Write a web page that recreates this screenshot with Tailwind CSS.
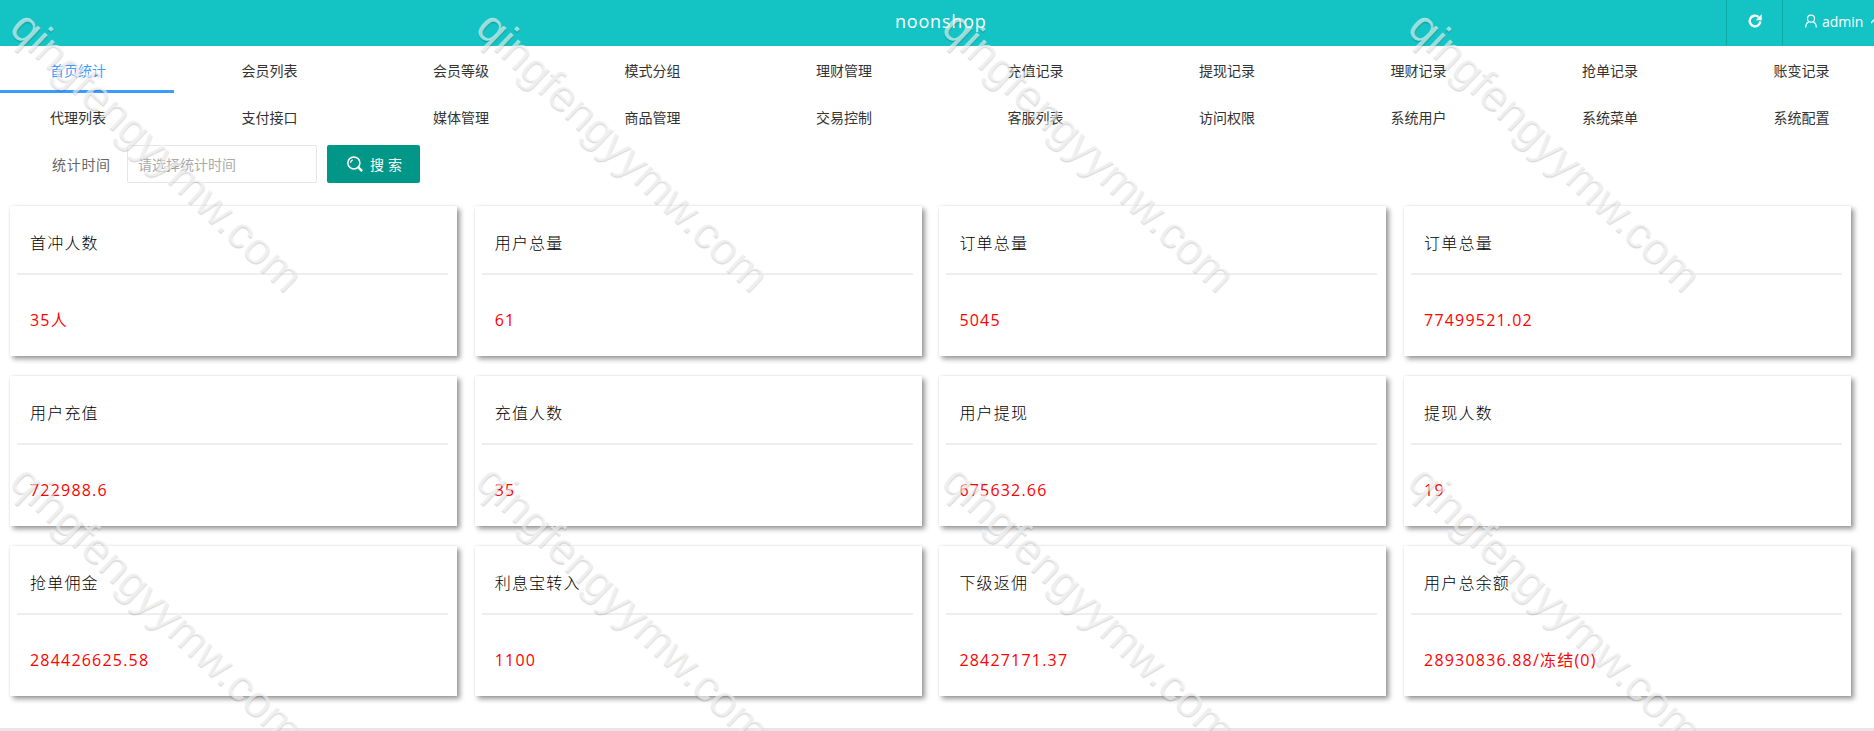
<!DOCTYPE html>
<html lang="zh">
<head>
<meta charset="utf-8">
<script src="https://cdn.jsdelivr.net/npm/@tailwindcss/browser@4"></script>
<title>noonshop</title>
</head>
<body class="relative h-[731px] w-[1874px] overflow-hidden bg-white font-['Open_Sans','Noto_Sans_CJK_SC',sans-serif]">
<header class="flex h-[46px] items-center bg-[#14c4c5] text-white">
  <div class="flex-1 pb-[3px] pl-[895px] text-[18px] font-medium tracking-[0.8px]">noonshop</div>
  <div class="flex h-full w-[56px] items-center justify-center border-l border-[#0fa9aa] pb-[4px]">
    <svg class="h-[16px] w-[16px]" viewBox="0 0 24 24" fill="none" stroke="white" stroke-width="3.500"><path d="M20 12.500a8 8 0 1 1-2.800-6.600"/><path d="M22 2v9h-9z" fill="white" stroke="none"/></svg>
  </div>
  <div class="flex h-full w-[92px] items-center overflow-hidden border-l border-[#0fa9aa] pb-[4px] pl-[21px] text-[14px]">
    <svg class="mr-[4px] h-[14px] w-[14px] shrink-0" viewBox="0 0 24 24" fill="none" stroke="white" stroke-width="2"><circle cx="12" cy="8" r="6"/><path d="M3 23c0-6 3-9 6-10M21 23c0-6-3-9-6-10"/></svg>
    <span>admin</span>
    <svg class="ml-[8px] h-[6px] w-[8px] shrink-0" viewBox="0 0 8 6" fill="none" stroke="white" stroke-width="1.300"><path d="M0 5l4-4 4 4"/></svg>
  </div>
</header>
<nav class="grid grid-cols-[repeat(10,174px)] gap-x-[17.5px] text-[14px] text-[#333]">
  <a class="h-[47px] border-b-[3px] border-[#3b9cff] pl-[50px] pt-[14px] leading-[22px] text-[#409eff]">首页统计</a>
  <a class="h-[47px] pl-[50px] pt-[14px] leading-[22px]">会员列表</a>
  <a class="h-[47px] pl-[50px] pt-[14px] leading-[22px]">会员等级</a>
  <a class="h-[47px] pl-[50px] pt-[14px] leading-[22px]">模式分组</a>
  <a class="h-[47px] pl-[50px] pt-[14px] leading-[22px]">理财管理</a>
  <a class="h-[47px] pl-[50px] pt-[14px] leading-[22px]">充值记录</a>
  <a class="h-[47px] pl-[50px] pt-[14px] leading-[22px]">提现记录</a>
  <a class="h-[47px] pl-[50px] pt-[14px] leading-[22px]">理财记录</a>
  <a class="h-[47px] pl-[50px] pt-[14px] leading-[22px]">抢单记录</a>
  <a class="h-[47px] pl-[50px] pt-[14px] leading-[22px]">账变记录</a>
  <a class="h-[46px] pl-[50px] pt-[14px] leading-[22px]">代理列表</a>
  <a class="h-[46px] pl-[50px] pt-[14px] leading-[22px]">支付接口</a>
  <a class="h-[46px] pl-[50px] pt-[14px] leading-[22px]">媒体管理</a>
  <a class="h-[46px] pl-[50px] pt-[14px] leading-[22px]">商品管理</a>
  <a class="h-[46px] pl-[50px] pt-[14px] leading-[22px]">交易控制</a>
  <a class="h-[46px] pl-[50px] pt-[14px] leading-[22px]">客服列表</a>
  <a class="h-[46px] pl-[50px] pt-[14px] leading-[22px]">访问权限</a>
  <a class="h-[46px] pl-[50px] pt-[14px] leading-[22px]">系统用户</a>
  <a class="h-[46px] pl-[50px] pt-[14px] leading-[22px]">系统菜单</a>
  <a class="h-[46px] pl-[50px] pt-[14px] leading-[22px]">系统配置</a>
</nav>
<form class="mt-[6px] flex h-[38px] items-center pl-[52px] text-[14px]">
  <label class="w-[75px] tracking-[0.7px] text-[#666]">统计时间</label>
  <div class="flex h-[38px] w-[190px] items-center rounded-[2px] border border-[#e6e6e6] pl-[10px] text-[#aaa]">请选择统计时间</div>
  <button type="button" class="ml-[10px] flex h-[38px] w-[93px] items-center justify-center gap-[6px] rounded-[2px] bg-[#009688] pl-[5px] tracking-[4px] text-white">
    <svg class="h-[18px] w-[18px]" viewBox="0 0 24 24" fill="none" stroke="white" stroke-width="2"><circle cx="10.500" cy="10.500" r="8"/><path d="M16.500 16.500l5 5" stroke-width="3"/><path d="M6 10.500a4.500 4.500 0 0 1 3-4" stroke-width="1.500"/></svg>
    <span>搜索</span>
  </button>
</form>
<main class="mt-[23px] grid grid-cols-[repeat(4,447px)] gap-x-[17.7px] gap-y-[20px] pl-[10px]">
  <section class="h-[150px] bg-white pl-[7px] pr-[9px] shadow-[3px_3px_5px_rgba(0,0,0,0.4),0_0_2px_rgba(0,0,0,0.1)]"><h3 class="h-[69px] border-b-2 border-[#eee] pl-[13px] pt-[25px] text-[16px] font-light leading-[24px] tracking-[1.200px] text-black">首冲人数</h3><p class="pl-[13px] pt-[33px] text-[16px] leading-[24px] tracking-[1.200px] text-[#ff0000]">35人</p></section>
  <section class="h-[150px] bg-white pl-[7px] pr-[9px] shadow-[3px_3px_5px_rgba(0,0,0,0.4),0_0_2px_rgba(0,0,0,0.1)]"><h3 class="h-[69px] border-b-2 border-[#eee] pl-[13px] pt-[25px] text-[16px] font-light leading-[24px] tracking-[1.200px] text-black">用户总量</h3><p class="pl-[13px] pt-[33px] text-[16px] leading-[24px] tracking-[1.200px] text-[#ff0000]">61</p></section>
  <section class="h-[150px] bg-white pl-[7px] pr-[9px] shadow-[3px_3px_5px_rgba(0,0,0,0.4),0_0_2px_rgba(0,0,0,0.1)]"><h3 class="h-[69px] border-b-2 border-[#eee] pl-[13px] pt-[25px] text-[16px] font-light leading-[24px] tracking-[1.200px] text-black">订单总量</h3><p class="pl-[13px] pt-[33px] text-[16px] leading-[24px] tracking-[1.200px] text-[#ff0000]">5045</p></section>
  <section class="h-[150px] bg-white pl-[7px] pr-[9px] shadow-[3px_3px_5px_rgba(0,0,0,0.4),0_0_2px_rgba(0,0,0,0.1)]"><h3 class="h-[69px] border-b-2 border-[#eee] pl-[13px] pt-[25px] text-[16px] font-light leading-[24px] tracking-[1.200px] text-black">订单总量</h3><p class="pl-[13px] pt-[33px] text-[16px] leading-[24px] tracking-[1.200px] text-[#ff0000]">77499521.02</p></section>
  <section class="h-[150px] bg-white pl-[7px] pr-[9px] shadow-[3px_3px_5px_rgba(0,0,0,0.4),0_0_2px_rgba(0,0,0,0.1)]"><h3 class="h-[69px] border-b-2 border-[#eee] pl-[13px] pt-[25px] text-[16px] font-light leading-[24px] tracking-[1.200px] text-black">用户充值</h3><p class="pl-[13px] pt-[33px] text-[16px] leading-[24px] tracking-[1.200px] text-[#ff0000]">722988.6</p></section>
  <section class="h-[150px] bg-white pl-[7px] pr-[9px] shadow-[3px_3px_5px_rgba(0,0,0,0.4),0_0_2px_rgba(0,0,0,0.1)]"><h3 class="h-[69px] border-b-2 border-[#eee] pl-[13px] pt-[25px] text-[16px] font-light leading-[24px] tracking-[1.200px] text-black">充值人数</h3><p class="pl-[13px] pt-[33px] text-[16px] leading-[24px] tracking-[1.200px] text-[#ff0000]">35</p></section>
  <section class="h-[150px] bg-white pl-[7px] pr-[9px] shadow-[3px_3px_5px_rgba(0,0,0,0.4),0_0_2px_rgba(0,0,0,0.1)]"><h3 class="h-[69px] border-b-2 border-[#eee] pl-[13px] pt-[25px] text-[16px] font-light leading-[24px] tracking-[1.200px] text-black">用户提现</h3><p class="pl-[13px] pt-[33px] text-[16px] leading-[24px] tracking-[1.200px] text-[#ff0000]">675632.66</p></section>
  <section class="h-[150px] bg-white pl-[7px] pr-[9px] shadow-[3px_3px_5px_rgba(0,0,0,0.4),0_0_2px_rgba(0,0,0,0.1)]"><h3 class="h-[69px] border-b-2 border-[#eee] pl-[13px] pt-[25px] text-[16px] font-light leading-[24px] tracking-[1.200px] text-black">提现人数</h3><p class="pl-[13px] pt-[33px] text-[16px] leading-[24px] tracking-[1.200px] text-[#ff0000]">19</p></section>
  <section class="h-[150px] bg-white pl-[7px] pr-[9px] shadow-[3px_3px_5px_rgba(0,0,0,0.4),0_0_2px_rgba(0,0,0,0.1)]"><h3 class="h-[69px] border-b-2 border-[#eee] pl-[13px] pt-[25px] text-[16px] font-light leading-[24px] tracking-[1.200px] text-black">抢单佣金</h3><p class="pl-[13px] pt-[33px] text-[16px] leading-[24px] tracking-[1.200px] text-[#ff0000]">284426625.58</p></section>
  <section class="h-[150px] bg-white pl-[7px] pr-[9px] shadow-[3px_3px_5px_rgba(0,0,0,0.4),0_0_2px_rgba(0,0,0,0.1)]"><h3 class="h-[69px] border-b-2 border-[#eee] pl-[13px] pt-[25px] text-[16px] font-light leading-[24px] tracking-[1.200px] text-black">利息宝转入</h3><p class="pl-[13px] pt-[33px] text-[16px] leading-[24px] tracking-[1.200px] text-[#ff0000]">1100</p></section>
  <section class="h-[150px] bg-white pl-[7px] pr-[9px] shadow-[3px_3px_5px_rgba(0,0,0,0.4),0_0_2px_rgba(0,0,0,0.1)]"><h3 class="h-[69px] border-b-2 border-[#eee] pl-[13px] pt-[25px] text-[16px] font-light leading-[24px] tracking-[1.200px] text-black">下级返佣</h3><p class="pl-[13px] pt-[33px] text-[16px] leading-[24px] tracking-[1.200px] text-[#ff0000]">28427171.37</p></section>
  <section class="h-[150px] bg-white pl-[7px] pr-[9px] shadow-[3px_3px_5px_rgba(0,0,0,0.4),0_0_2px_rgba(0,0,0,0.1)]"><h3 class="h-[69px] border-b-2 border-[#eee] pl-[13px] pt-[25px] text-[16px] font-light leading-[24px] tracking-[1.200px] text-black">用户总余额</h3><p class="pl-[13px] pt-[33px] text-[16px] leading-[24px] tracking-[1.200px] text-[#ff0000]">28930836.88/冻结(0)</p></section>
</main>
<div class="absolute bottom-0 left-0 h-[3px] w-full bg-[#e6e6e6]"></div>

<div class="pointer-events-none absolute left-[34px] top-[3px] origin-top-left rotate-[43.5deg] whitespace-nowrap font-['Liberation_Sans',sans-serif] text-[45px] leading-[45px] text-white/60 [text-shadow:1px_1px_1px_rgba(0,0,0,0.16)]">qingfengyymw.com</div>
<div class="pointer-events-none absolute left-[500px] top-[3px] origin-top-left rotate-[43.5deg] whitespace-nowrap font-['Liberation_Sans',sans-serif] text-[45px] leading-[45px] text-white/60 [text-shadow:1px_1px_1px_rgba(0,0,0,0.16)]">qingfengyymw.com</div>
<div class="pointer-events-none absolute left-[966px] top-[3px] origin-top-left rotate-[43.5deg] whitespace-nowrap font-['Liberation_Sans',sans-serif] text-[45px] leading-[45px] text-white/60 [text-shadow:1px_1px_1px_rgba(0,0,0,0.16)]">qingfengyymw.com</div>
<div class="pointer-events-none absolute left-[1432px] top-[3px] origin-top-left rotate-[43.5deg] whitespace-nowrap font-['Liberation_Sans',sans-serif] text-[45px] leading-[45px] text-white/60 [text-shadow:1px_1px_1px_rgba(0,0,0,0.16)]">qingfengyymw.com</div>
<div class="pointer-events-none absolute left-[34px] top-[456px] origin-top-left rotate-[43.5deg] whitespace-nowrap font-['Liberation_Sans',sans-serif] text-[45px] leading-[45px] text-white/60 [text-shadow:1px_1px_1px_rgba(0,0,0,0.16)]">qingfengyymw.com</div>
<div class="pointer-events-none absolute left-[500px] top-[456px] origin-top-left rotate-[43.5deg] whitespace-nowrap font-['Liberation_Sans',sans-serif] text-[45px] leading-[45px] text-white/60 [text-shadow:1px_1px_1px_rgba(0,0,0,0.16)]">qingfengyymw.com</div>
<div class="pointer-events-none absolute left-[966px] top-[456px] origin-top-left rotate-[43.5deg] whitespace-nowrap font-['Liberation_Sans',sans-serif] text-[45px] leading-[45px] text-white/60 [text-shadow:1px_1px_1px_rgba(0,0,0,0.16)]">qingfengyymw.com</div>
<div class="pointer-events-none absolute left-[1432px] top-[456px] origin-top-left rotate-[43.5deg] whitespace-nowrap font-['Liberation_Sans',sans-serif] text-[45px] leading-[45px] text-white/60 [text-shadow:1px_1px_1px_rgba(0,0,0,0.16)]">qingfengyymw.com</div>
</body>
</html>
